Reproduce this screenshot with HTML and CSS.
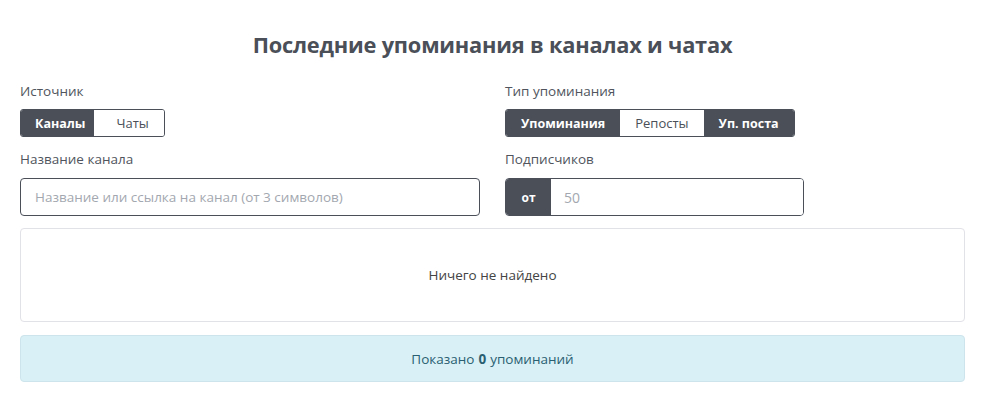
FILE: index.html
```html
<!DOCTYPE html>
<html lang="ru">
<head>
<meta charset="utf-8">
<title>Упоминания</title>
<link rel="stylesheet" href="styles.css">
</head>
<body>
<div class="page">
  <h1 class="title">Последние упоминания в каналах и чатах</h1>
  <div class="filters">
    <div class="field">
      <div class="label">Источник</div>
      <div class="btn-group">
        <button class="btn active first">Каналы</button>
        <button class="btn last">Чаты</button>
      </div>
    </div>
    <div class="field">
      <div class="label">Тип упоминания</div>
      <div class="btn-group">
        <button class="btn active">Упоминания</button>
        <button class="btn">Репосты</button>
        <button class="btn active">Уп. поста</button>
      </div>
    </div>
    <div class="field">
      <div class="label">Название канала</div>
      <input class="text-input" type="text" placeholder="Название или ссылка на канал (от 3 символов)">
    </div>
    <div class="field">
      <div class="label">Подписчиков</div>
      <div class="input-group">
        <span class="addon">от</span>
        <input class="group-input" type="text" placeholder="50">
      </div>
    </div>
  </div>
  <div class="card">Ничего не найдено</div>
  <div class="alert">Показано <b>0</b> упоминаний</div>
</div>
</body>
</html>
```

FILE: styles.css
```css
* { box-sizing: border-box; }
body {
  margin: 0;
  background: #fff;
  font-family: "Open Sans", "Noto Sans", sans-serif;
  color: #4a4f58;
}
.page {
  padding: 0 22px 0 20px;
}
.title {
  margin: 30px 0 21px;
  font-size: 21.8px;
  line-height: 30px;
  font-weight: 700;
  text-align: center;
  color: #4a4f58;
  letter-spacing: -0.2px;
}
.filters {
  display: grid;
  grid-template-columns: 1fr 1fr;
  column-gap: 25px;
  row-gap: 12px;
}
.field {
  display: flex;
  flex-direction: column;
  align-items: flex-start;
}
.label {
  font-size: 13.5px;
  line-height: 20px;
  color: #50555d;
  margin-bottom: 8px;
}
.btn-group {
  display: flex;
  height: 28px;
  border: 1px solid #4a4f58;
  border-radius: 3px;
  overflow: hidden;
}
.btn {
  font-family: inherit;
  font-size: 13px;
  border: 0;
  background: #fff;
  color: #4a4f58;
  padding: 0 15px;
  margin: 0;
  height: 100%;
  cursor: pointer;
}
.btn.active {
  background: #4a4f58;
  color: #fff;
  font-weight: 700;
  font-size: 12.5px;
}
.btn.first {
  padding: 0 9px 0 14px;
}
.btn.last {
  padding: 0 15px 0 22px;
}
.text-input {
  width: 100%;
  height: 38px;
  margin-top: 1px;
  border: 1px solid #4a4f58;
  border-radius: 4px;
  padding: 0 14px;
  font-family: inherit;
  font-size: 13.5px;
  color: #4a4f58;
}
.text-input::placeholder, .group-input::placeholder {
  color: #a3a8b0;
}
.input-group {
  display: flex;
  width: 299px;
  height: 38px;
  margin-top: 1px;
  border: 1px solid #4a4f58;
  border-radius: 4px;
  overflow: hidden;
}
.addon {
  width: 45px;
  background: #4a4f58;
  color: #fff;
  font-size: 12px;
  font-weight: 700;
  display: flex;
  align-items: center;
  justify-content: center;
}
.group-input {
  flex: 1;
  border: 0;
  padding: 0 13px;
  font-family: inherit;
  font-size: 14px;
  color: #4a4f58;
  outline: none;
}
.card {
  margin-top: 12px;
  height: 94px;
  border: 1px solid #e1e1e8;
  border-radius: 4px;
  display: flex;
  align-items: center;
  justify-content: center;
  font-size: 13.5px;
  color: #444;
}
.alert {
  margin-top: 13px;
  height: 47px;
  border: 1px solid #cde4ec;
  border-radius: 4px;
  background: #d9f0f6;
  display: flex;
  align-items: center;
  justify-content: center;
  font-size: 13.5px;
  color: #2a5f72;
}
.alert b {
  margin: 0 4px;
  font-weight: 700;
}
```
